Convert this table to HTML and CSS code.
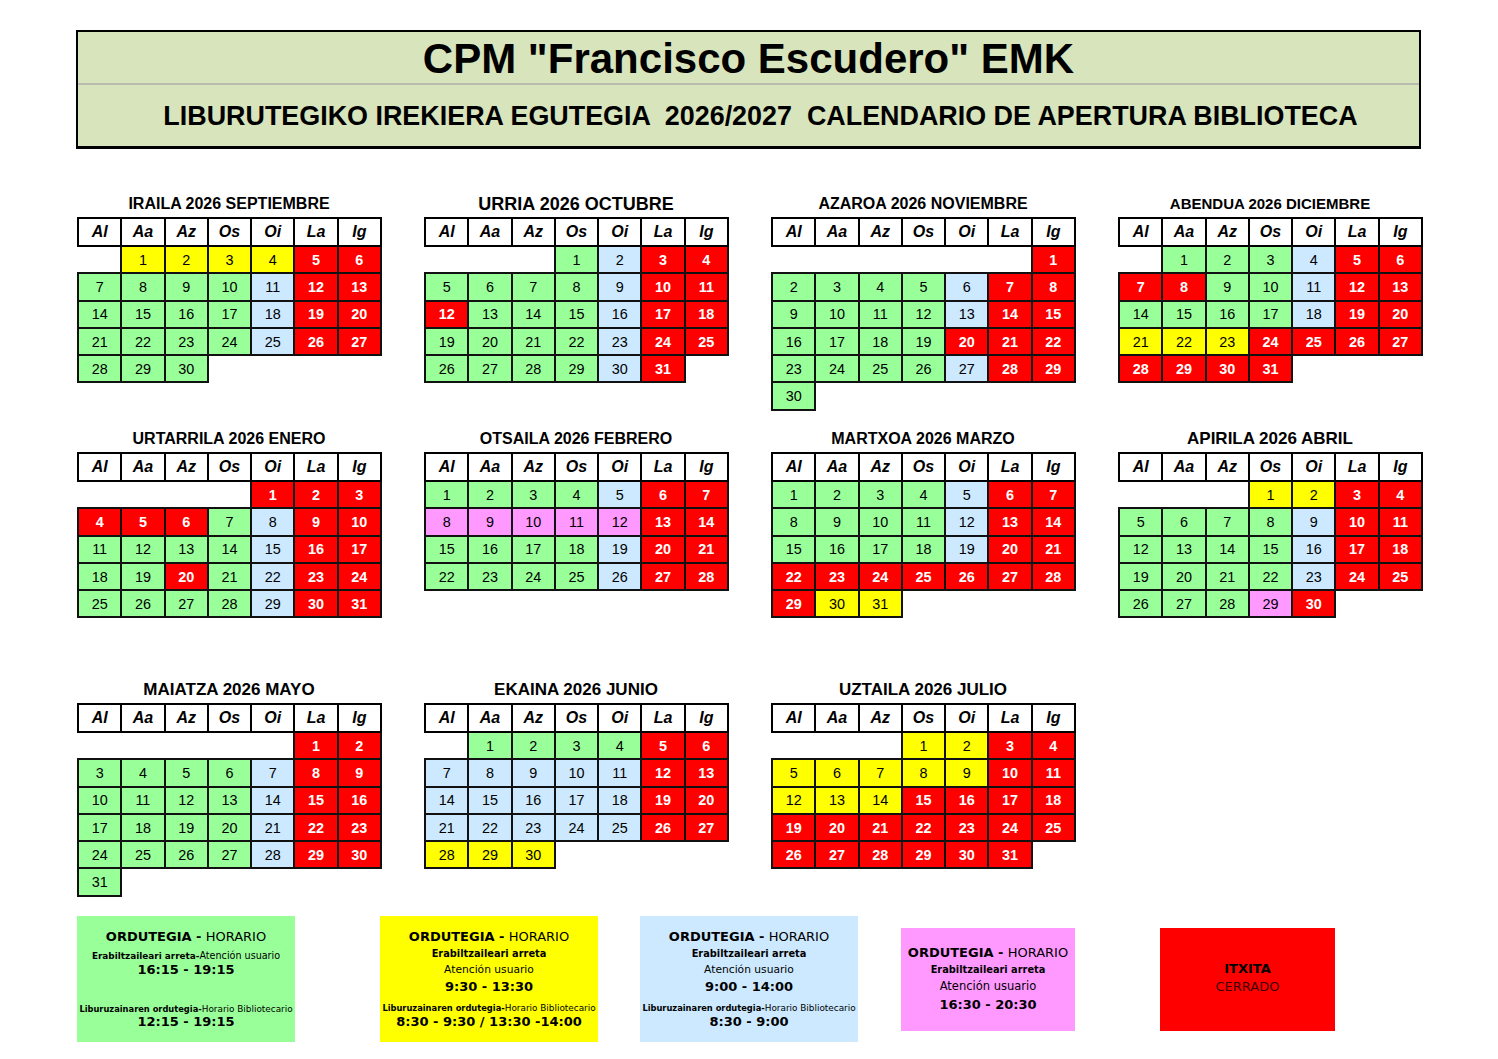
FILE: index.html
```html
<!DOCTYPE html>
<html lang="eu">
<head>
<meta charset="utf-8">
<title>CPM "Francisco Escudero" EMK - Liburutegia</title>
<link rel="stylesheet" href="styles.css">
</head>
<body>
<div class="hdr">
  <div class="hdr-top">CPM "Francisco Escudero" EMK</div>
  <div class="hdr-bot">LIBURUTEGIKO IREKIERA EGUTEGIA &nbsp;2026/2027 &nbsp;CALENDARIO DE APERTURA BIBLIOTECA</div>
</div>

<div class="months">

  <div class="month">
    <div class="mt t16">IRAILA 2026 SEPTIEMBRE</div>
    <table class="cal">
      <tr><th>Al</th><th>Aa</th><th>Az</th><th>Os</th><th>Oi</th><th>La</th><th>Ig</th></tr>
      <tr><td></td><td class="y">1</td><td class="y">2</td><td class="y">3</td><td class="y">4</td><td class="r">5</td><td class="r">6</td></tr>
      <tr><td class="g">7</td><td class="g">8</td><td class="g">9</td><td class="g">10</td><td class="b">11</td><td class="r">12</td><td class="r">13</td></tr>
      <tr><td class="g">14</td><td class="g">15</td><td class="g">16</td><td class="g">17</td><td class="b">18</td><td class="r">19</td><td class="r">20</td></tr>
      <tr><td class="g">21</td><td class="g">22</td><td class="g">23</td><td class="g">24</td><td class="b">25</td><td class="r">26</td><td class="r">27</td></tr>
      <tr><td class="g">28</td><td class="g">29</td><td class="g">30</td></tr>
    </table>
  </div>

  <div class="month">
    <div class="mt t18">URRIA 2026 OCTUBRE</div>
    <table class="cal">
      <tr><th>Al</th><th>Aa</th><th>Az</th><th>Os</th><th>Oi</th><th>La</th><th>Ig</th></tr>
      <tr><td></td><td></td><td></td><td class="g">1</td><td class="b">2</td><td class="r">3</td><td class="r">4</td></tr>
      <tr><td class="g">5</td><td class="g">6</td><td class="g">7</td><td class="g">8</td><td class="b">9</td><td class="r">10</td><td class="r">11</td></tr>
      <tr><td class="r">12</td><td class="g">13</td><td class="g">14</td><td class="g">15</td><td class="b">16</td><td class="r">17</td><td class="r">18</td></tr>
      <tr><td class="g">19</td><td class="g">20</td><td class="g">21</td><td class="g">22</td><td class="b">23</td><td class="r">24</td><td class="r">25</td></tr>
      <tr><td class="g">26</td><td class="g">27</td><td class="g">28</td><td class="g">29</td><td class="b">30</td><td class="r">31</td></tr>
    </table>
  </div>

  <div class="month">
    <div class="mt t16">AZAROA 2026 NOVIEMBRE</div>
    <table class="cal">
      <tr><th>Al</th><th>Aa</th><th>Az</th><th>Os</th><th>Oi</th><th>La</th><th>Ig</th></tr>
      <tr><td></td><td></td><td></td><td></td><td></td><td></td><td class="r">1</td></tr>
      <tr><td class="g">2</td><td class="g">3</td><td class="g">4</td><td class="g">5</td><td class="b">6</td><td class="r">7</td><td class="r">8</td></tr>
      <tr><td class="g">9</td><td class="g">10</td><td class="g">11</td><td class="g">12</td><td class="b">13</td><td class="r">14</td><td class="r">15</td></tr>
      <tr><td class="g">16</td><td class="g">17</td><td class="g">18</td><td class="g">19</td><td class="r">20</td><td class="r">21</td><td class="r">22</td></tr>
      <tr><td class="g">23</td><td class="g">24</td><td class="g">25</td><td class="g">26</td><td class="b">27</td><td class="r">28</td><td class="r">29</td></tr>
      <tr><td class="g">30</td></tr>
    </table>
  </div>

  <div class="month">
    <div class="mt t15">ABENDUA 2026 DICIEMBRE</div>
    <table class="cal">
      <tr><th>Al</th><th>Aa</th><th>Az</th><th>Os</th><th>Oi</th><th>La</th><th>Ig</th></tr>
      <tr><td></td><td class="g">1</td><td class="g">2</td><td class="g">3</td><td class="b">4</td><td class="r">5</td><td class="r">6</td></tr>
      <tr><td class="r">7</td><td class="r">8</td><td class="g">9</td><td class="g">10</td><td class="b">11</td><td class="r">12</td><td class="r">13</td></tr>
      <tr><td class="g">14</td><td class="g">15</td><td class="g">16</td><td class="g">17</td><td class="b">18</td><td class="r">19</td><td class="r">20</td></tr>
      <tr><td class="y">21</td><td class="y">22</td><td class="y">23</td><td class="r">24</td><td class="r">25</td><td class="r">26</td><td class="r">27</td></tr>
      <tr><td class="r">28</td><td class="r">29</td><td class="r">30</td><td class="r">31</td></tr>
    </table>
  </div>

  <div class="month">
    <div class="mt t16">URTARRILA 2026 ENERO</div>
    <table class="cal">
      <tr><th>Al</th><th>Aa</th><th>Az</th><th>Os</th><th>Oi</th><th>La</th><th>Ig</th></tr>
      <tr><td></td><td></td><td></td><td></td><td class="r">1</td><td class="r">2</td><td class="r">3</td></tr>
      <tr><td class="r">4</td><td class="r">5</td><td class="r">6</td><td class="g">7</td><td class="b">8</td><td class="r">9</td><td class="r">10</td></tr>
      <tr><td class="g">11</td><td class="g">12</td><td class="g">13</td><td class="g">14</td><td class="b">15</td><td class="r">16</td><td class="r">17</td></tr>
      <tr><td class="g">18</td><td class="g">19</td><td class="r">20</td><td class="g">21</td><td class="b">22</td><td class="r">23</td><td class="r">24</td></tr>
      <tr><td class="g">25</td><td class="g">26</td><td class="g">27</td><td class="g">28</td><td class="b">29</td><td class="r">30</td><td class="r">31</td></tr>
    </table>
  </div>

  <div class="month">
    <div class="mt t16">OTSAILA 2026 FEBRERO</div>
    <table class="cal">
      <tr><th>Al</th><th>Aa</th><th>Az</th><th>Os</th><th>Oi</th><th>La</th><th>Ig</th></tr>
      <tr><td class="g">1</td><td class="g">2</td><td class="g">3</td><td class="g">4</td><td class="b">5</td><td class="r">6</td><td class="r">7</td></tr>
      <tr><td class="p">8</td><td class="p">9</td><td class="p">10</td><td class="p">11</td><td class="p">12</td><td class="r">13</td><td class="r">14</td></tr>
      <tr><td class="g">15</td><td class="g">16</td><td class="g">17</td><td class="g">18</td><td class="b">19</td><td class="r">20</td><td class="r">21</td></tr>
      <tr><td class="g">22</td><td class="g">23</td><td class="g">24</td><td class="g">25</td><td class="b">26</td><td class="r">27</td><td class="r">28</td></tr>
    </table>
  </div>

  <div class="month">
    <div class="mt t16">MARTXOA 2026 MARZO</div>
    <table class="cal">
      <tr><th>Al</th><th>Aa</th><th>Az</th><th>Os</th><th>Oi</th><th>La</th><th>Ig</th></tr>
      <tr><td class="g">1</td><td class="g">2</td><td class="g">3</td><td class="g">4</td><td class="b">5</td><td class="r">6</td><td class="r">7</td></tr>
      <tr><td class="g">8</td><td class="g">9</td><td class="g">10</td><td class="g">11</td><td class="b">12</td><td class="r">13</td><td class="r">14</td></tr>
      <tr><td class="g">15</td><td class="g">16</td><td class="g">17</td><td class="g">18</td><td class="b">19</td><td class="r">20</td><td class="r">21</td></tr>
      <tr><td class="r">22</td><td class="r">23</td><td class="r">24</td><td class="r">25</td><td class="r">26</td><td class="r">27</td><td class="r">28</td></tr>
      <tr><td class="r">29</td><td class="y">30</td><td class="y">31</td></tr>
    </table>
  </div>

  <div class="month">
    <div class="mt t17">APIRILA 2026 ABRIL</div>
    <table class="cal">
      <tr><th>Al</th><th>Aa</th><th>Az</th><th>Os</th><th>Oi</th><th>La</th><th>Ig</th></tr>
      <tr><td></td><td></td><td></td><td class="y">1</td><td class="y">2</td><td class="r">3</td><td class="r">4</td></tr>
      <tr><td class="g">5</td><td class="g">6</td><td class="g">7</td><td class="g">8</td><td class="b">9</td><td class="r">10</td><td class="r">11</td></tr>
      <tr><td class="g">12</td><td class="g">13</td><td class="g">14</td><td class="g">15</td><td class="b">16</td><td class="r">17</td><td class="r">18</td></tr>
      <tr><td class="g">19</td><td class="g">20</td><td class="g">21</td><td class="g">22</td><td class="b">23</td><td class="r">24</td><td class="r">25</td></tr>
      <tr><td class="g">26</td><td class="g">27</td><td class="g">28</td><td class="p">29</td><td class="r">30</td></tr>
    </table>
  </div>

  <div class="month">
    <div class="mt t17">MAIATZA 2026 MAYO</div>
    <table class="cal">
      <tr><th>Al</th><th>Aa</th><th>Az</th><th>Os</th><th>Oi</th><th>La</th><th>Ig</th></tr>
      <tr><td></td><td></td><td></td><td></td><td></td><td class="r">1</td><td class="r">2</td></tr>
      <tr><td class="g">3</td><td class="g">4</td><td class="g">5</td><td class="g">6</td><td class="b">7</td><td class="r">8</td><td class="r">9</td></tr>
      <tr><td class="g">10</td><td class="g">11</td><td class="g">12</td><td class="g">13</td><td class="b">14</td><td class="r">15</td><td class="r">16</td></tr>
      <tr><td class="g">17</td><td class="g">18</td><td class="g">19</td><td class="g">20</td><td class="b">21</td><td class="r">22</td><td class="r">23</td></tr>
      <tr><td class="g">24</td><td class="g">25</td><td class="g">26</td><td class="g">27</td><td class="b">28</td><td class="r">29</td><td class="r">30</td></tr>
      <tr><td class="g">31</td></tr>
    </table>
  </div>

  <div class="month">
    <div class="mt t17">EKAINA 2026 JUNIO</div>
    <table class="cal">
      <tr><th>Al</th><th>Aa</th><th>Az</th><th>Os</th><th>Oi</th><th>La</th><th>Ig</th></tr>
      <tr><td></td><td class="g">1</td><td class="g">2</td><td class="g">3</td><td class="g">4</td><td class="r">5</td><td class="r">6</td></tr>
      <tr><td class="b">7</td><td class="b">8</td><td class="b">9</td><td class="b">10</td><td class="b">11</td><td class="r">12</td><td class="r">13</td></tr>
      <tr><td class="b">14</td><td class="b">15</td><td class="b">16</td><td class="b">17</td><td class="b">18</td><td class="r">19</td><td class="r">20</td></tr>
      <tr><td class="b">21</td><td class="b">22</td><td class="b">23</td><td class="b">24</td><td class="b">25</td><td class="r">26</td><td class="r">27</td></tr>
      <tr><td class="y">28</td><td class="y">29</td><td class="y">30</td></tr>
    </table>
  </div>

  <div class="month">
    <div class="mt t17">UZTAILA 2026 JULIO</div>
    <table class="cal">
      <tr><th>Al</th><th>Aa</th><th>Az</th><th>Os</th><th>Oi</th><th>La</th><th>Ig</th></tr>
      <tr><td></td><td></td><td></td><td class="y">1</td><td class="y">2</td><td class="r">3</td><td class="r">4</td></tr>
      <tr><td class="y">5</td><td class="y">6</td><td class="y">7</td><td class="y">8</td><td class="y">9</td><td class="r">10</td><td class="r">11</td></tr>
      <tr><td class="y">12</td><td class="y">13</td><td class="y">14</td><td class="r">15</td><td class="r">16</td><td class="r">17</td><td class="r">18</td></tr>
      <tr><td class="r">19</td><td class="r">20</td><td class="r">21</td><td class="r">22</td><td class="r">23</td><td class="r">24</td><td class="r">25</td></tr>
      <tr><td class="r">26</td><td class="r">27</td><td class="r">28</td><td class="r">29</td><td class="r">30</td><td class="r">31</td></tr>
    </table>
  </div>

</div>

<div class="legend">
  <div class="lg lg-green">
    <div class="l-head"><b>ORDUTEGIA -</b> HORARIO</div>
    <div class="l-att"><b class="sb">Erabiltzaileari arreta-</b><span class="sr">Atención usuario</span></div>
    <div class="l-time">16:15 - 19:15</div>
    <div class="l-lib l-gap"><b class="xb">Liburuzainaren ordutegia-</b><span class="xr">Horario Bibliotecario</span></div>
    <div class="l-time">12:15 - 19:15</div>
  </div>
  <div class="lg lg-yellow">
    <div class="l-head"><b>ORDUTEGIA -</b> HORARIO</div>
    <div class="l-bold">Erabiltzaileari arreta</div>
    <div class="l-reg">Atención usuario</div>
    <div class="l-time">9:30 - 13:30</div>
    <div class="l-lib"><b class="xb">Liburuzainaren ordutegia-</b><span class="xr">Horario Bibliotecario</span></div>
    <div class="l-time">8:30 - 9:30 / 13:30 -14:00</div>
  </div>
  <div class="lg lg-blue">
    <div class="l-head"><b>ORDUTEGIA -</b> HORARIO</div>
    <div class="l-bold">Erabiltzaileari arreta</div>
    <div class="l-reg">Atención usuario</div>
    <div class="l-time">9:00 - 14:00</div>
    <div class="l-lib"><b class="xb">Liburuzainaren ordutegia-</b><span class="xr">Horario Bibliotecario</span></div>
    <div class="l-time">8:30 - 9:00</div>
  </div>
  <div class="lg lg-pink">
    <div class="l-head"><b>ORDUTEGIA -</b> HORARIO</div>
    <div class="l-bold">Erabiltzaileari arreta</div>
    <div class="l-reg l-reg-big">Atención usuario</div>
    <div class="l-time">16:30 - 20:30</div>
  </div>
  <div class="lg lg-red">
    <div class="l-closed"><b>ITXITA</b></div>
    <div class="l-closed l-closed-es">CERRADO</div>
  </div>
</div>
</body>
</html>
```

FILE: styles.css
```css
html, body {
  margin: 0;
  padding: 0;
  background: #ffffff;
}

body {
  font-family: "Liberation Sans", Arial, sans-serif;
  color: #000;
  width: 1498px;
}

/* ---------- Header ---------- */
.hdr {
  margin: 30px 0 0 76px;
  width: 1345px;
  height: 119px;
  box-sizing: border-box;
  border: 2px solid #000;
  border-bottom-width: 3px;
  background: #d8e4bc;
  display: flex;
  flex-direction: column;
}

.hdr-top {
  height: 53px;
  box-sizing: border-box;
  border-bottom: 2px solid #b8bcb0;
  display: flex;
  align-items: center;
  justify-content: center;
  font-weight: bold;
  font-size: 42px;
  padding-top: 3px;
}

.hdr-bot {
  flex: 1;
  display: flex;
  align-items: center;
  justify-content: center;
  font-weight: bold;
  font-size: 26.9px;
  padding-left: 24px;
  padding-top: 2px;
  white-space: nowrap;
}

/* ---------- Month grid ---------- */
.months {
  margin: 42px 0 0 77px;
  display: grid;
  grid-template-columns: repeat(4, 304px);
  grid-template-rows: 235px 251px 239px;
  column-gap: 43px;
}

.mt {
  height: 26px;
  line-height: 26px;
  text-align: center;
  font-weight: bold;
  white-space: nowrap;
}
.t15 { font-size: 15px; }
.t16 { font-size: 16px; }
.t17 { font-size: 17px; }
.t18 { font-size: 18px; }

.cal {
  width: 305px;
  border-collapse: collapse;
  table-layout: fixed;
}

.cal th,
.cal td {
  padding: 0;
  text-align: center;
  vertical-align: middle;
}

.cal th {
  height: 26px;
  border: 2px solid #000;
  background: #fff;
  font-style: italic;
  font-weight: bold;
  font-size: 16px;
}

.cal td {
  height: 25.3px;
  font-size: 14.4px;
  border: none;
}

.cal td.g,
.cal td.b,
.cal td.y,
.cal td.p,
.cal td.r {
  border: 2px solid #111;
}

.g { background: #99ff99; }
.b { background: #cce9ff; }
.y { background: #ffff00; }
.p { background: #ff99ff; }
.r {
  background: #ff0000;
  color: #fff;
  font-weight: bold;
}

/* ---------- Legend ---------- */
.legend {
  margin-left: 77px;
  height: 126px;
  display: flex;
  align-items: center;
  font-family: "DejaVu Sans", Verdana, sans-serif;
  text-align: center;
}

.lg {
  box-sizing: border-box;
  display: flex;
  flex-direction: column;
  align-items: center;
}

.lg-green  { width: 218px; height: 126px; background: #99ff99; margin-right: 85px; padding-top: 13px; }
.lg-yellow { width: 218px; height: 126px; background: #ffff00; margin-right: 42px; padding-top: 13px; }
.lg-blue   { width: 218px; height: 126px; background: #cce9ff; margin-right: 43px; padding-top: 13px; }
.lg-pink   { width: 174px; height: 103px; background: #ff99ff; margin-right: 85px; padding-top: 17px; }
.lg-red    { width: 175px; height: 103px; background: #ff0000; justify-content: center; padding-bottom: 2px; }

.l-head {
  height: 16px;
  line-height: 16px;
  font-size: 13px;
  white-space: nowrap;
}

.l-att {
  height: 17px;
  line-height: 17px;
  white-space: nowrap;
}
.sb { font-size: 8.9px; }
.sr { font-size: 9.6px; }

.l-bold {
  height: 17px;
  line-height: 17px;
  font-size: 9.8px;
  font-weight: bold;
  white-space: nowrap;
}

.l-reg {
  height: 16px;
  line-height: 16px;
  font-size: 10.7px;
  white-space: nowrap;
}
.l-reg-big { font-size: 11.5px; height: 17px; line-height: 17px; }

.l-time {
  height: 17px;
  line-height: 17px;
  font-size: 13px;
  font-weight: bold;
  white-space: nowrap;
}
.lg-green .l-time { height: 16px; line-height: 16px; }
.lg-pink .l-time { height: 20px; line-height: 20px; }

.l-lib {
  margin-top: 4px;
  height: 14px;
  line-height: 14px;
  white-space: nowrap;
}
.l-gap { margin-top: 22px; }
.xb { font-size: 8.3px; }
.xr { font-size: 8.9px; }

.l-closed {
  height: 18px;
  line-height: 18px;
  font-size: 13px;
  color: #000;
}
.l-closed-es { color: #400000; }
```
